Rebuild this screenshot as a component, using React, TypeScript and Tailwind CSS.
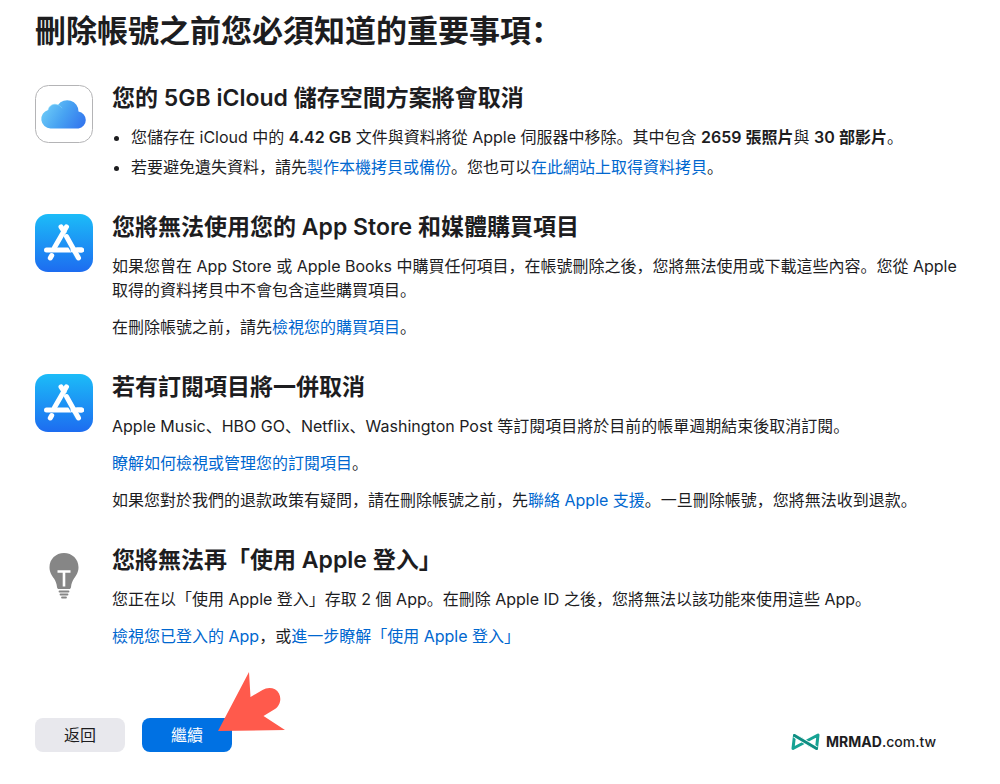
import type { ReactNode } from 'react'

interface SectionProps {
  icon: ReactNode
  title: string
  children: ReactNode
}

function CloudIcon() {
  return (
    <svg width="58" height="58" viewBox="0 0 58 58" aria-hidden="true">
      <defs>
        <linearGradient id="cloud" x1="0" y1="0.3" x2="1" y2="0.7">
          <stop offset="0" stopColor="#6fcdf8" />
          <stop offset="0.5" stopColor="#48a3f2" />
          <stop offset="1" stopColor="#3478ee" />
        </linearGradient>
      </defs>
      <rect x="0.5" y="0.5" width="57" height="57" rx="13" fill="#fff" stroke="#b4b4b6" />
      <path
        d="M15.500 43.500a9.500 9.500 0 0 1-2.400-18.600 7 7 0 0 1 9.900-5A11.300 11.300 0 0 1 43.500 26.500 8.600 8.600 0 0 1 43.500 43.500z"
        fill="url(#cloud)"
      />
      <path d="M13.100 24.900a7 7 0 0 1 9.900-5c1.800.7 3.200 1.900 4 3.300" fill="none" stroke="#84d7fa" strokeWidth="0.8" opacity="0.7" />
    </svg>
  )
}

function AppStoreIcon() {
  return (
    <svg width="58" height="58" viewBox="0 0 58 58" aria-hidden="true">
      <defs>
        <linearGradient id="store" x1="0" y1="0" x2="0" y2="1">
          <stop offset="0" stopColor="#1cbcf8" />
          <stop offset="1" stopColor="#1d6cf0" />
        </linearGradient>
      </defs>
      <rect width="58" height="58" rx="13" fill="url(#store)" />
      <g fill="none" stroke="#fff" strokeWidth="5" strokeLinecap="round">
        <path d="M31.500 12.800 19.500 33.500" />
        <path d="M26 12.800 29 17.500" />
        <path d="M16.700 41.500 15.300 44" />
        <path d="M11.500 36H46.500" />
      </g>
      <path d="M31 22.500 43.500 44" stroke="#2292f5" strokeWidth="7" />
      <path d="M38 36h8.500" stroke="#fff" strokeWidth="5" strokeLinecap="round" />
      <path d="M31.500 22.500 43.500 44" stroke="#fff" strokeWidth="5" strokeLinecap="round" />
    </svg>
  )
}

function BulbIcon() {
  return (
    <svg width="58" height="58" viewBox="0 0 58 58" aria-hidden="true">
      <path
        d="M29 6c8.200 0 14.500 6.200 14.500 14.200 0 5.300-2.400 8.300-4.500 11.300-1.700 2.500-2.600 5-3 8.500-.2 1.500-.8 2-2 2H24c-1.200 0-1.800-.5-2-2-.4-3.500-1.300-6-3-8.500-2.100-3-4.500-6-4.500-11.300C14.500 12.200 20.800 6 29 6z"
        fill="#868686"
      />
      <path d="M22.500 24.500h13M29 24.500V39.500" fill="none" stroke="#fff" strokeWidth="2.600" />
      <path d="M24.500 44.500h9M25.500 47.500h7M27 50.500h4" fill="none" stroke="#868686" strokeWidth="1.800" strokeLinecap="round" />
    </svg>
  )
}

function Link({ children }: { children: ReactNode }) {
  return (
    <a href="#" className="text-[#0067cf] hover:underline">
      {children}
    </a>
  )
}

function Section({ icon, title, children }: SectionProps) {
  return (
    <section className="flex gap-[19px]">
      <div className="mt-px shrink-0">{icon}</div>
      <div className="min-w-0 flex-1">
        <h2 className="text-[23px] leading-7 font-semibold">{title}</h2>
        <div className="mt-[13px] flex flex-col gap-[13px] leading-6">{children}</div>
      </div>
    </section>
  )
}

export default function App() {
  return (
    <main className="bg-white pt-[11px] pr-7 pb-8 pl-[35px] font-[Inter,'Noto_Sans_CJK_SC',sans-serif] text-base text-[#1d1d1f]" lang="zh">
      <h1 className="text-[31px] leading-10 font-semibold">刪除帳號之前您必須知道的重要事項：</h1>

      <div className="mt-[33px] flex flex-col gap-[34px]">
        <Section icon={<CloudIcon />} title="您的 5GB iCloud 儲存空間方案將會取消">
          <ul className="flex list-disc flex-col gap-1.5 pl-[19px]">
            <li>
              您儲存在 iCloud 中的 <b className="font-semibold">4.42 GB</b> 文件與資料將從 Apple 伺服器中移除。其中包含{' '}
              <b className="font-semibold">2659 張照片</b>與 <b className="font-semibold">30 部影片</b>。
            </li>
            <li>
              若要避免遺失資料，請先<Link>製作本機拷貝或備份</Link>。您也可以<Link>在此網站上取得資料拷貝</Link>。
            </li>
          </ul>
        </Section>

        <Section icon={<AppStoreIcon />} title="您將無法使用您的 App Store 和媒體購買項目">
          <p>
            如果您曾在 App Store 或 Apple Books 中購買任何項目，在帳號刪除之後，您將無法使用或下載這些內容。您從 Apple
            取得的資料拷貝中不會包含這些購買項目。
          </p>
          <p>
            在刪除帳號之前，請先<Link>檢視您的購買項目</Link>。
          </p>
        </Section>

        <Section icon={<AppStoreIcon />} title="若有訂閱項目將一併取消">
          <p>Apple Music、HBO GO、Netflix、Washington Post 等訂閱項目將於目前的帳單週期結束後取消訂閱。</p>
          <p>
            <Link>瞭解如何檢視或管理您的訂閱項目</Link>。
          </p>
          <p>
            如果您對於我們的退款政策有疑問，請在刪除帳號之前，先<Link>聯絡 Apple 支援</Link>。一旦刪除帳號，您將無法收到退款。
          </p>
        </Section>

        <Section icon={<BulbIcon />} title="您將無法再「使用 Apple 登入」">
          <p>您正在以「使用 Apple 登入」存取 2 個 App。在刪除 Apple ID 之後，您將無法以該功能來使用這些 App。</p>
          <p>
            <Link>檢視您已登入的 App</Link>，或<Link>進一步瞭解「使用 Apple 登入」</Link>
          </p>
        </Section>
      </div>

      <footer className="mt-[70px] flex items-center justify-between pr-9">
        <div className="flex gap-[17px]">
          <button type="button" className="h-[34px] w-[90px] rounded-lg bg-[#e8e8ed]">
            返回
          </button>
          <div className="relative">
            <button type="button" className="h-[34px] w-[90px] rounded-lg bg-[#0071e3] text-white">
              繼續
            </button>
            {/* Pointer over the continue button */}
            <svg className="pointer-events-none absolute -top-[46px] left-[76px]" width="68" height="60" viewBox="0 0 68 60" aria-hidden="true">
              <path d="M0 59 31 0 32.500 25 44.500 18C50 14.500 58 15.500 61 21.500S61.500 34 57 37L45.500 44 67 58z" fill="#ff5a4c" />
            </svg>
          </div>
        </div>

        <div className="mt-3.5 flex items-center gap-1.5">
          <svg width="29" height="18" viewBox="0 0 29 18" aria-hidden="true">
            <path d="M12 6.500 3.500 2.500 2 15.500 10.500 11 18.500 6.500 27 2 25.500 15.500 17 11.500" fill="none" stroke="#16a394" strokeWidth="3" strokeLinejoin="round" />
            <path d="M3.500 2.500 25.500 15.500" fill="none" stroke="#fff" strokeWidth="4.500" />
            <path d="M3.500 2.500 25.500 15.500" fill="none" stroke="#0f8d82" strokeWidth="3" strokeLinecap="round" />
          </svg>
          <span className="text-sm leading-5 font-medium">
            <b>MRMAD</b>.com.tw
          </span>
        </div>
      </footer>
    </main>
  )
}
